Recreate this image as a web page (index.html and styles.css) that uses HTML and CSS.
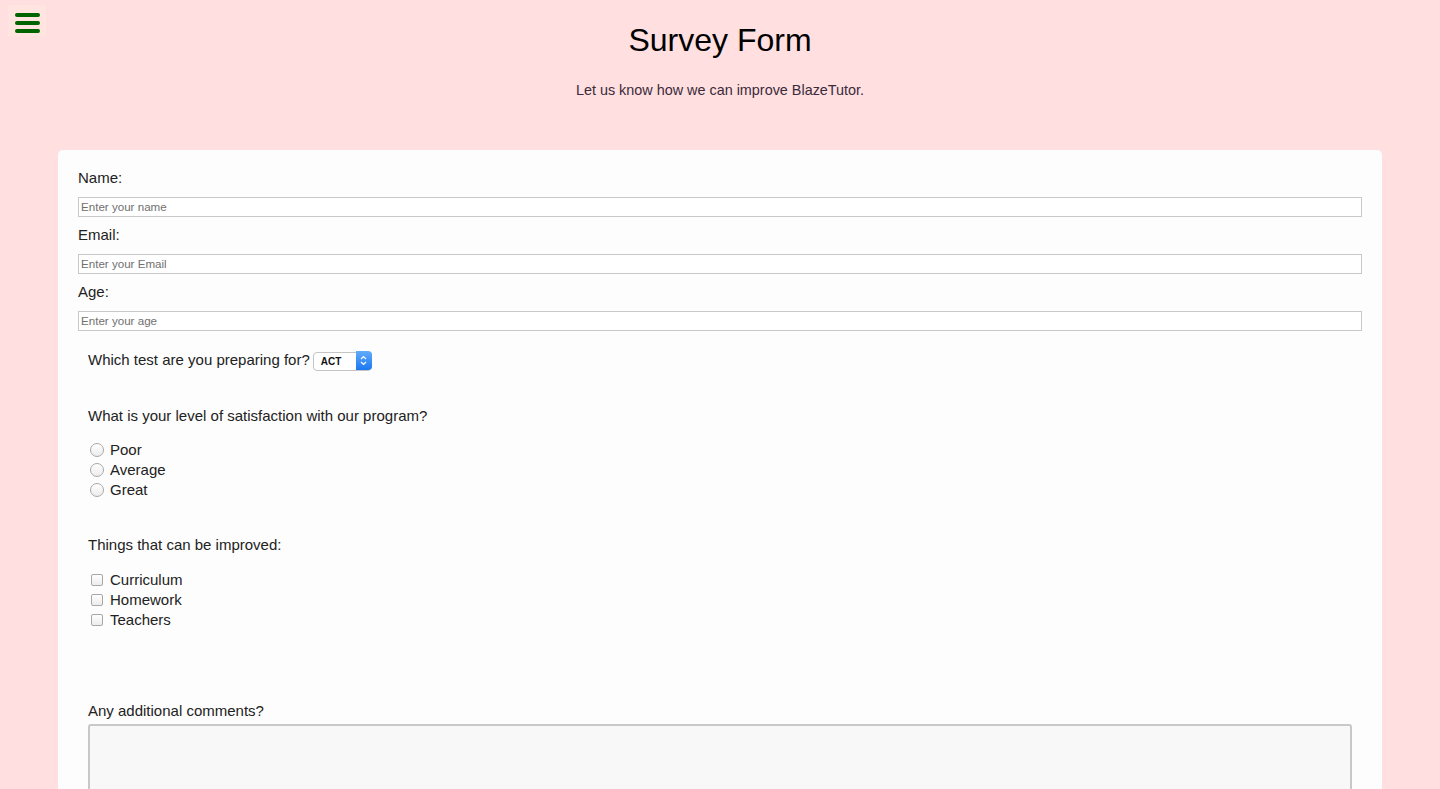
FILE: index.html
```html
<!DOCTYPE html>
<html lang="en">
<head>
<meta charset="utf-8">
<title>Survey Form</title>
<link rel="stylesheet" href="styles.css">
</head>
<body>
<button class="menu" aria-label="Menu">
  <span class="bar"></span><span class="bar"></span><span class="bar"></span>
</button>
<header class="header">
  <h1 class="title">Survey Form</h1>
  <p class="subtitle">Let us know how we can improve BlazeTutor.</p>
</header>
<form class="card">
  <div class="field">
    <label class="label" for="name">Name:</label>
    <input class="input" id="name" type="text" placeholder="Enter your name">
  </div>
  <div class="field">
    <label class="label" for="email">Email:</label>
    <input class="input" id="email" type="text" placeholder="Enter your Email">
  </div>
  <div class="field">
    <label class="label" for="age">Age:</label>
    <input class="input" id="age" type="text" placeholder="Enter your age">
  </div>
  <div class="section">
    <div class="row-test">
      <span class="q">Which test are you preparing for?</span>
      <span class="select-wrap">
        <select class="select"><option>ACT</option><option>SAT</option></select>
        <span class="select-btn"><svg width="7" height="11" viewBox="0 0 7 11"><path d="M1 4 L3.5 1.5 L6 4 M1 7 L3.5 9.5 L6 7" fill="none" stroke="#fff" stroke-width="1.2"/></svg></span>
      </span>
    </div>
    <p class="q q-sat">What is your level of satisfaction with our program?</p>
    <div class="opts">
      <label class="opt"><input class="radio" type="radio" name="sat"> Poor</label>
      <label class="opt"><input class="radio" type="radio" name="sat"> Average</label>
      <label class="opt"><input class="radio" type="radio" name="sat"> Great</label>
    </div>
    <p class="q q-imp">Things that can be improved:</p>
    <div class="opts opts-check">
      <label class="opt"><input class="check" type="checkbox"> Curriculum</label>
      <label class="opt"><input class="check" type="checkbox"> Homework</label>
      <label class="opt"><input class="check" type="checkbox"> Teachers</label>
    </div>
    <p class="q q-com">Any additional comments?</p>
    <textarea class="textarea"></textarea>
  </div>
</form>
</body>
</html>
```
FILE: styles.css
```css
html, body {
  margin: 0;
  padding: 0;
}
body {
  background: #ffdfe0;
  font-family: "Liberation Sans", Arial, sans-serif;
  color: #222;
  font-size: 15px;
}
.menu {
  position: absolute;
  left: 8px;
  top: 5px;
  width: 38px;
  height: 31px;
  padding: 8px 0 0 7px;
  border: 0;
  background: #ffe4df;
  display: flex;
  flex-direction: column;
  gap: 4px;
  box-sizing: border-box;
}
.bar {
  display: block;
  width: 25px;
  height: 4px;
  border-radius: 2px;
  background: #006400;
}
.header {
  text-align: center;
}
.title {
  margin: 20px 0 0;
  font-size: 32px;
  line-height: 40px;
  font-weight: normal;
  color: #000;
}
.subtitle {
  margin: 20px 0 0;
  font-size: 14.4px;
  line-height: 20px;
  color: #3a2a3a;
}
.card {
  margin: 50px 58px 0;
  background: #fdfdfd;
  border-radius: 5px;
  padding: 18px 20px 40px;
}
.field {
  margin-bottom: 8px;
}
.label {
  display: block;
  font-size: 15px;
  line-height: 20px;
  margin-bottom: 9px;
}
.input {
  display: block;
  width: 100%;
  box-sizing: border-box;
  height: 20px;
  border: 1px solid #c8c8c8;
  padding: 0 2px 1px;
  font-family: "Liberation Sans", Arial, sans-serif;
  font-size: 11.6px;
  background: #fff;
  margin: 0;
}
.input::placeholder {
  color: #707070;
}
.section {
  padding: 10px 10px 0;
}
.row-test {
  display: flex;
  align-items: center;
  height: 22px;
  gap: 3px;
}
.q {
  font-size: 15px;
  line-height: 20px;
  margin: 0;
}
.select-wrap {
  position: relative;
  display: inline-block;
  width: 59px;
  height: 19px;
}
.select {
  appearance: none;
  -webkit-appearance: none;
  width: 59px;
  height: 19px;
  border: 1px solid #c4c4c4;
  border-radius: 4px;
  background: #fff;
  font-family: "Liberation Sans", Arial, sans-serif;
  font-size: 10px;
  font-weight: bold;
  padding: 0 0 0 7px;
  color: #111;
  margin: 0;
  box-sizing: border-box;
}
.select-btn {
  position: absolute;
  right: 0;
  top: 0;
  width: 16px;
  height: 19px;
  border-radius: 0 4px 4px 0;
  background: linear-gradient(#62acfb, #1a78f2);
  display: flex;
  align-items: center;
  justify-content: center;
  pointer-events: none;
}
.q-sat {
  margin-top: 35px;
}
.opts {
  margin-top: 13px;
  display: flex;
  flex-direction: column;
}
.opts-check {
  margin-top: 14px;
}
.opt {
  display: flex;
  align-items: center;
  height: 20px;
  font-size: 15px;
}
.radio {
  appearance: none;
  -webkit-appearance: none;
  box-sizing: border-box;
  width: 14px;
  height: 14px;
  margin: 1px 6px 0 2px;
  border: 1px solid #a8a8a8;
  border-radius: 50%;
  background: linear-gradient(#ffffff, #ececec);
}
.check {
  appearance: none;
  -webkit-appearance: none;
  box-sizing: border-box;
  width: 12px;
  height: 12px;
  margin: 2px 7px 0 3px;
  border: 1px solid #a8a8a8;
  border-radius: 2px;
  background: linear-gradient(#ffffff, #ececec);
}
.q-imp {
  margin-top: 36px;
}
.q-com {
  margin-top: 72px;
}
.textarea {
  display: block;
  width: 100%;
  box-sizing: border-box;
  height: 120px;
  margin-top: 3px;
  border: 2px solid #c8c8c8;
  border-radius: 3px;
  background: #f8f8f8;
  resize: vertical;
}
```
